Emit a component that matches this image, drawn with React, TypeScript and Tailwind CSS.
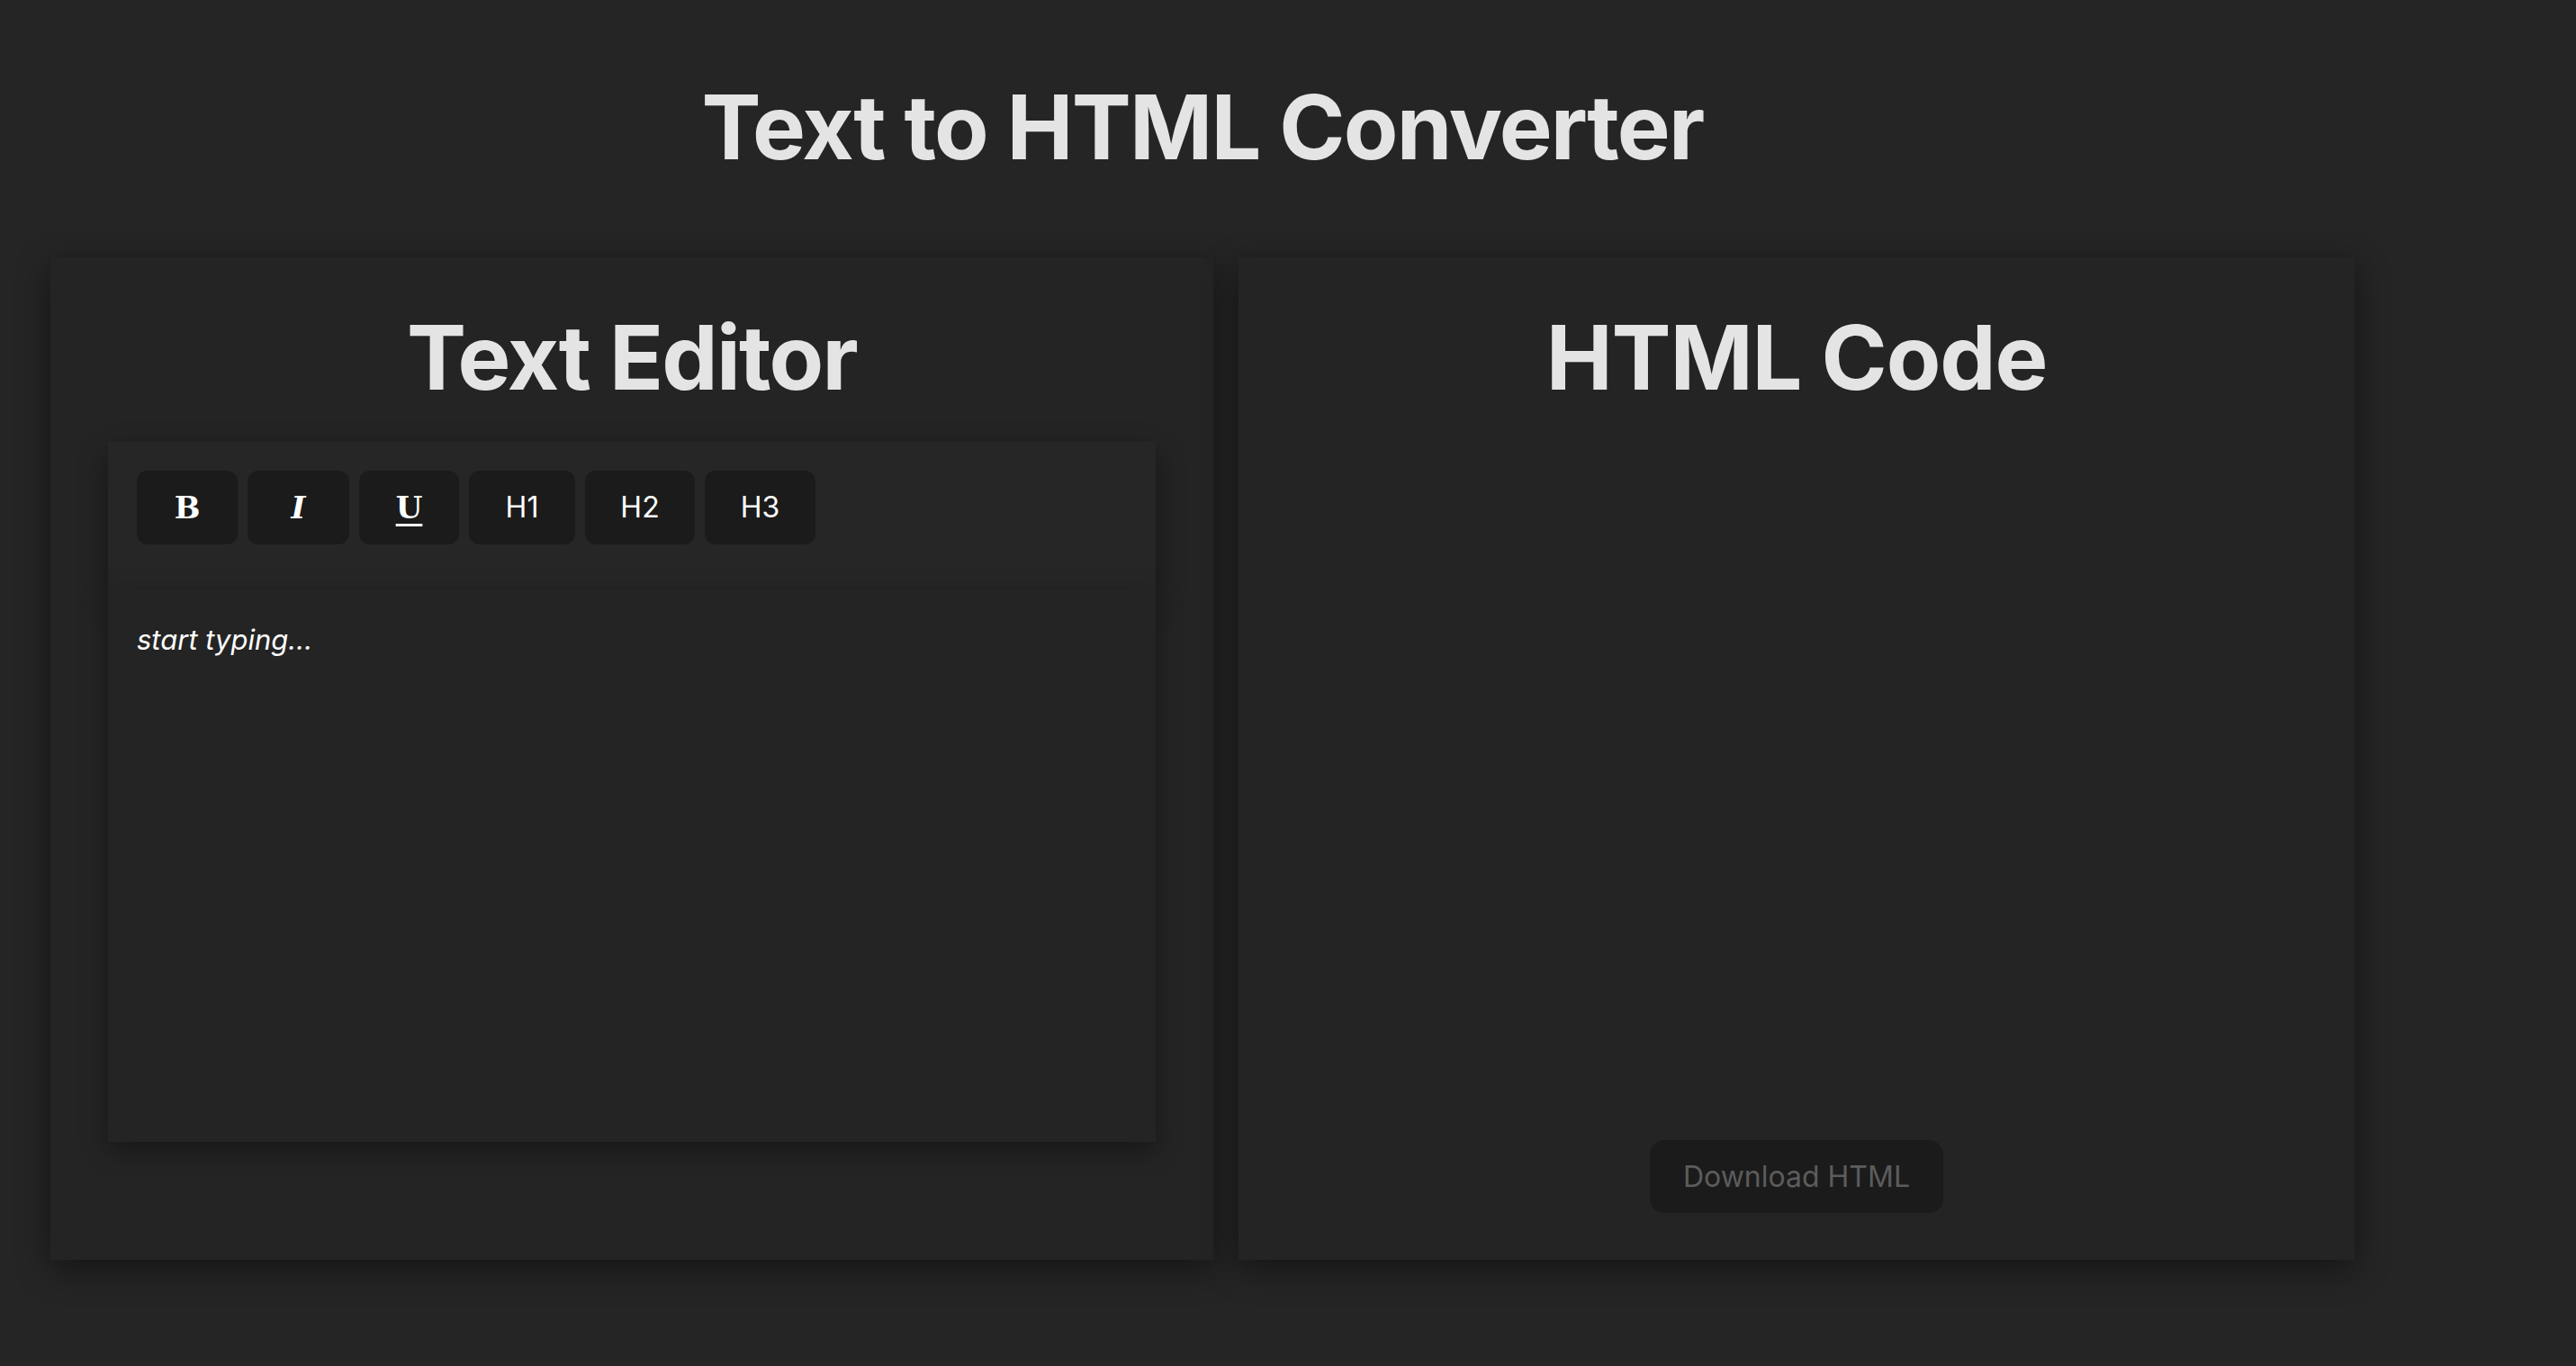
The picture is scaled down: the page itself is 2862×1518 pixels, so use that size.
import React, { useState } from 'react';

const tools = [
  { key: 'b', label: 'B', width: 'w-[112px]', font: 'font-["DejaVu_Serif",serif] font-bold text-[34px]' },
  { key: 'i', label: 'I', width: 'w-[113px]', font: 'font-["DejaVu_Serif",serif] font-bold italic text-[34px]' },
  { key: 'u', label: 'U', width: 'w-[111px]', font: 'font-["DejaVu_Serif",serif] font-bold underline decoration-[3px] underline-offset-[6px] text-[34px]' },
  { key: 'h1', label: 'H1', width: 'w-[118px]', font: 'text-[32px]' },
  { key: 'h2', label: 'H2', width: 'w-[122px]', font: 'text-[32px]' },
  { key: 'h3', label: 'H3', width: 'w-[123px]', font: 'text-[32px]' },
];

export default function App() {
  const [html] = useState('');

  return (
    <div className="min-h-screen w-full bg-[#252525] font-['Inter',sans-serif] text-[#e4e4e4]">
      <div className="w-[2672px]">
        <h1 className="pt-[92px] text-center text-[99px] font-bold leading-none tracking-[-0.018em]">Text to HTML Converter</h1>

        <div className="mt-[95px] flex gap-[28px] pl-[56px]">
          {/* editor side */}
          <section className="flex h-[1114px] w-[1292px] flex-col bg-[#242424] px-[64px] shadow-[0_10px_36px_rgba(0,0,0,0.45)]">
            <h2 className="pt-[62px] text-center text-[99px] font-bold leading-none tracking-[-0.018em]">Text Editor</h2>
            <div className="mt-[44px] flex gap-[11px] bg-[#262626] px-[32px] pb-[50px] pt-[32px] shadow-[0_12px_30px_rgba(0,0,0,0.4)]">
              {tools.map((t) => (
                <button
                  key={t.key}
                  type="button"
                  className={`flex h-[82px] items-center justify-center rounded-[12px] bg-[#1b1b1b] text-white ${t.width} ${t.font}`}
                >
                  {t.label}
                </button>
              ))}
            </div>
            <div className="h-[614px] bg-[#242424] px-[32px] pt-[32px] shadow-[0_10px_28px_rgba(0,0,0,0.35)]">
              <p className="text-[31px] italic leading-[48px] text-white">start typing...</p>
            </div>
          </section>

          {/* output side */}
          <section className="flex h-[1114px] w-[1240px] flex-col items-center bg-[#242424] shadow-[0_10px_36px_rgba(0,0,0,0.45)]">
            <h2 className="pt-[62px] text-center text-[99px] font-bold leading-none tracking-[-0.012em]">HTML Code</h2>
            <pre className="flex-1">{html}</pre>
            <button
              type="button"
              className="mb-[52px] flex h-[81px] w-[326px] items-center justify-center rounded-[16px] bg-[#1b1b1b] text-[32px] text-[#5c5c5c]"
            >
              Download HTML
            </button>
          </section>
        </div>
      </div>
    </div>
  );
}
